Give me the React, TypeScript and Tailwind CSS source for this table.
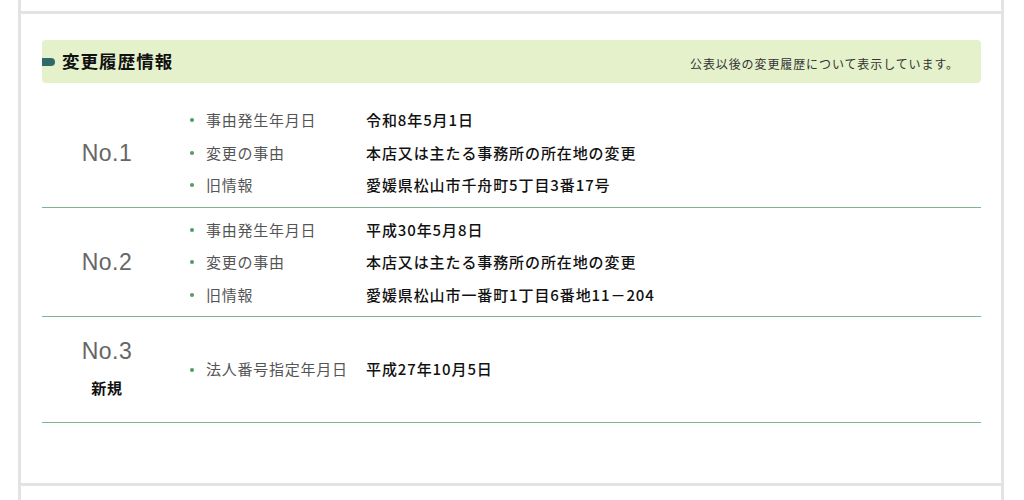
const HISTORY = [
  {
    no: "No.1",
    items: [
      { label: "事由発生年月日", value: "令和8年5月1日" },
      { label: "変更の事由", value: "本店又は主たる事務所の所在地の変更" },
      { label: "旧情報", value: "愛媛県松山市千舟町5丁目3番17号" },
    ],
  },
  {
    no: "No.2",
    items: [
      { label: "事由発生年月日", value: "平成30年5月8日" },
      { label: "変更の事由", value: "本店又は主たる事務所の所在地の変更" },
      { label: "旧情報", value: "愛媛県松山市一番町1丁目6番地11－204" },
    ],
  },
];

function Item({ label, value }: { label: string; value: string }) {
  return (
    <li className="flex items-center leading-[32.5px]">
      <span className="w-[4px] h-[4px] rounded-full bg-[#4f9d63] ml-[4px] mr-[12px]" />
      <span className="w-[160px] text-[15px] tracking-[0.05em] text-[#555]">{label}</span>
      <span className="text-[15px] tracking-[0.06em] font-medium text-[#111]">{value}</span>
    </li>
  );
}

export default function App() {
  return (
    <div
      className="h-[500px] bg-white overflow-hidden pl-[18px] pr-[20px]"
      style={{ fontFamily: '"Noto Sans CJK JP", "Noto Sans", sans-serif' }}
    >
      {/* previous card */}
      <div className="h-[14px] border-x-[3px] border-b-[3px] border-[#e3e3e3]" />

      {/* history card */}
      <div className="h-[472px] border-x-[3px] border-b-[3px] border-[#e3e3e3] pl-[21px] pr-[20px] pt-[26px]">
        <div className="h-[43px] rounded-[4px] bg-[#e4f1cb] flex items-center pr-[22px]">
          <span className="w-[13px] h-[8px] rounded-r-full rounded-l-[2px] bg-[#2e6b68] mr-[7px]" />
          <h2 className="text-[17.5px] font-bold tracking-[0.06em] text-[#111]">変更履歴情報</h2>
          <p className="ml-auto mt-[4px] text-[12px] tracking-[0.075em] text-[#333]">
            公表以後の変更履歴について表示しています。
          </p>
        </div>

        <div className="mt-[15px]">
          {HISTORY.map((h) => (
            <div key={h.no} className="flex items-center pt-[6px] pb-[5px] border-b border-[#80b38f]">
              <div className="w-[130px] text-center text-[23px] tracking-[0.02em] text-[#666] font-['Liberation_Sans',sans-serif]">
                {h.no}
              </div>
              <ul className="ml-[14px]">
                {h.items.map((it) => (
                  <Item key={it.label} label={it.label} value={it.value} />
                ))}
              </ul>
            </div>
          ))}
          <div className="h-[106px] flex items-center border-b border-[#80b38f]">
            <div className="w-[130px] flex flex-col items-center pt-[3px]">
              <span className="text-[23px] leading-[34px] tracking-[0.02em] text-[#666] font-['Liberation_Sans',sans-serif]">
                No.3
              </span>
              <span className="text-[15px] leading-[40px] font-bold tracking-[0.05em] text-[#111]">新規</span>
            </div>
            <ul className="ml-[14px]">
              <Item label="法人番号指定年月日" value="平成27年10月5日" />
            </ul>
          </div>
        </div>
      </div>

      {/* next card */}
      <div className="h-[20px] border-x-[3px] border-[#e3e3e3]" />
    </div>
  );
}
